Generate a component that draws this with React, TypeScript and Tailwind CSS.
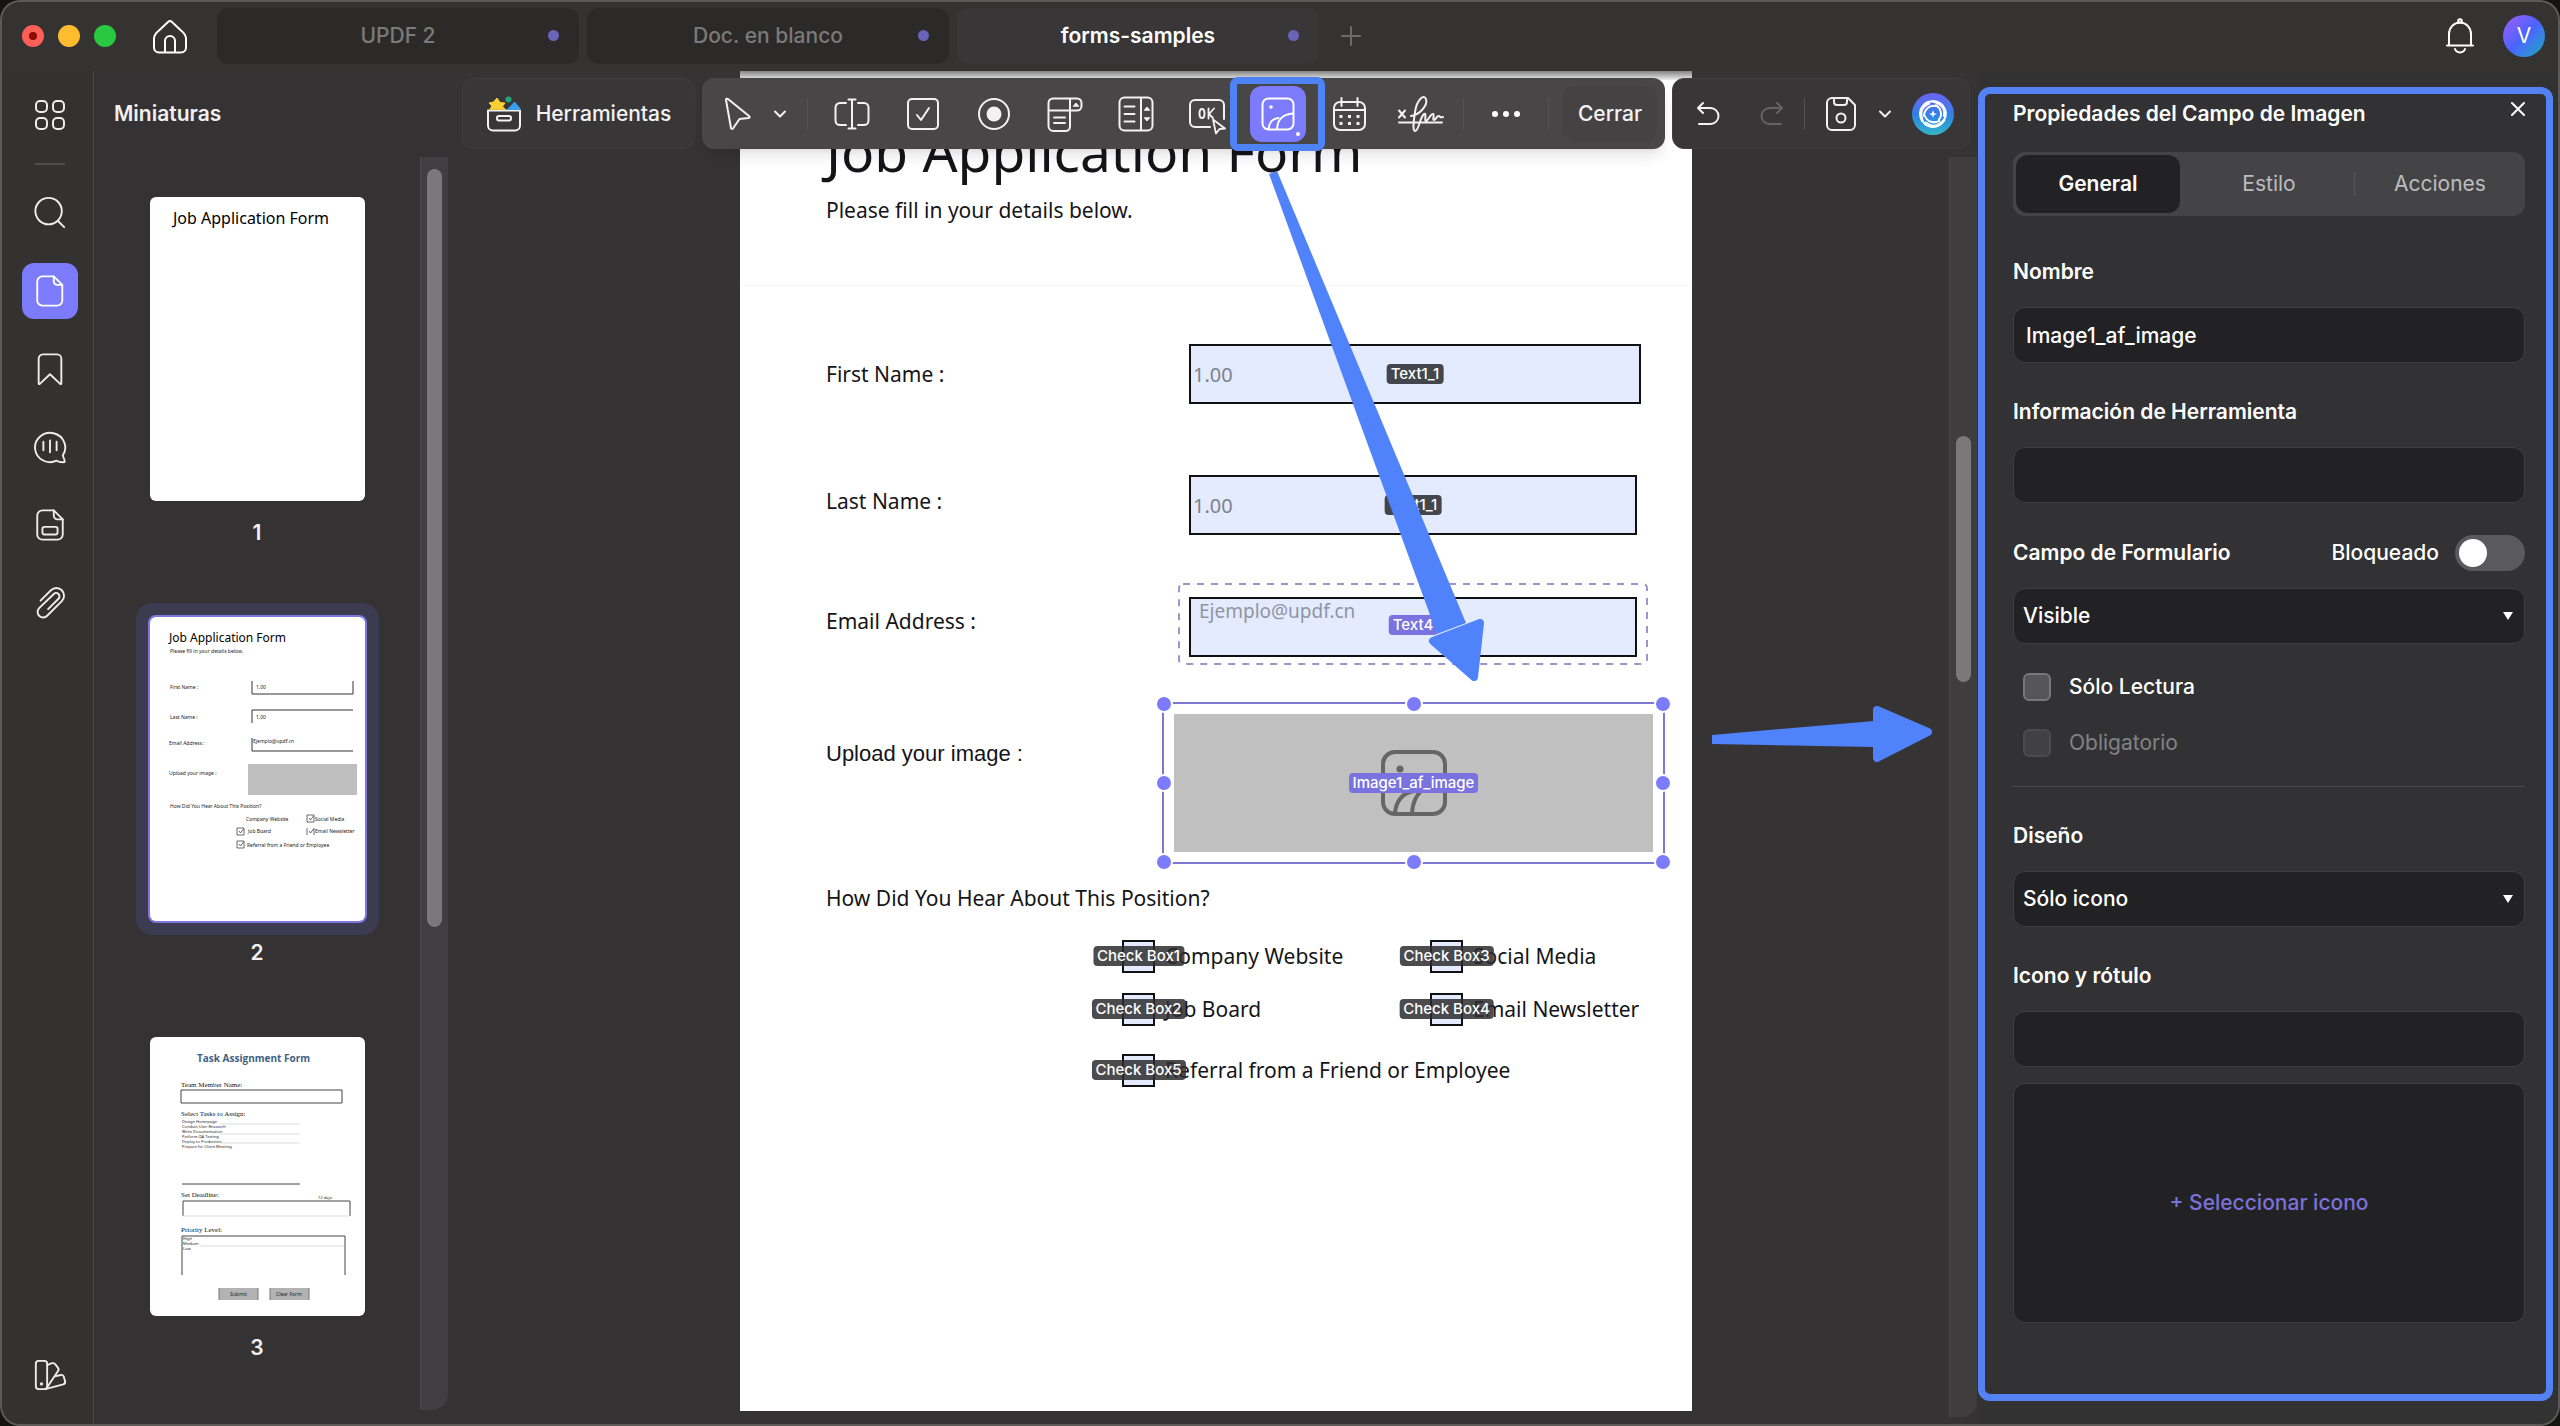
import React, { useState } from 'react';

const Svg: React.FC<{ w?: number; h?: number; box?: string; sw?: number; className?: string; children: React.ReactNode }> = ({
  w = 36,
  h = 36,
  box = '0 0 36 36',
  sw = 2,
  className,
  children,
}) => (
  <svg
    width={w}
    height={h}
    viewBox={box}
    fill="none"
    stroke="currentColor"
    strokeWidth={sw}
    strokeLinecap="round"
    strokeLinejoin="round"
    className={className}
    aria-hidden="true"
  >
    {children}
  </svg>
);

const ImageGlyph: React.FC = () => (
  <>
    <rect x="2.500" y="2.500" width="31" height="31" rx="6" />
    <circle cx="11" cy="11" r="1.8" fill="currentColor" stroke="none" />
    <path d="M8.5 33c.5-6 4-10.500 10-11" />
    <path d="M17 33c.5-9 6-15 16-15.500" />
  </>
);

const ChevronDown: React.FC = () => (
  <Svg w={12} h={8} box="0 0 12 8">
    <path d="M1 1.500l5 5 5-5" />
  </Svg>
);

const navItems = [
  { name: 'Buscar', icon: <><circle cx="16.500" cy="16" r="14" /><path d="M26.500 26.500l6.500 6.500" /></> },
  {
    name: 'Miniaturas',
    active: true,
    icon: <><path d="M9 2.500h13l9 9V28a5.500 5.500 0 0 1-5.500 5.500h-15A5.500 5.500 0 0 1 4.500 28V8A5.500 5.500 0 0 1 10 2.500" /><path d="M22 2.500V8a3.500 3.500 0 0 0 3.500 3.500H31" /></>,
  },
  { name: 'Marcadores', icon: <path d="M6 33V7a4.500 4.500 0 0 1 4.500-4.500h15A4.500 4.500 0 0 1 30 7v26q0 1.500-1.500.5L18 23.500 7.500 33.500Q6 34.500 6 33z" /> },
  { name: 'Comentarios', icon: <><path d="M31.500 27A16 15.500 0 1 0 25 32.500q3 2 8.500 1.500.5-1-2-7z" /><path d="M11 12.500v9M18 11v12.500M25 12.500v9" /></> },
  {
    name: 'Campos',
    icon: <><path d="M22 2.500H10A5.500 5.500 0 0 0 4.500 8v20a5.500 5.500 0 0 0 5.500 5.500h16a5.500 5.500 0 0 0 5.500-5.500V12z" /><path d="M22 2.500V8a4 4 0 0 0 4 4h5.500" /><rect x="10" y="20" width="16" height="8" rx="2" /></>,
  },
  { name: 'Adjuntos', icon: <path d="M8 15.500L19 4.500a8 8 0 0 1 11.500 11.500L15 31.500a5.500 5.500 0 0 1-8.500-8L22 8.500a3.500 3.500 0 0 1 5 5L16 24.500" /> },
];

const tools = [
  { name: 'Campo de texto', icon: <><path d="M12 7H6a4.500 4.500 0 0 0-4.500 4.500v13A4.500 4.500 0 0 0 6 29h6M24 7h6a4.500 4.500 0 0 1 4.500 4.500v13A4.500 4.500 0 0 1 30 29h-6M18 3.500v29M14.500 3.500h7M14.500 32.500h7" /></> },
  { name: 'Casilla', icon: <><rect x="3" y="3" width="30" height="30" rx="4" /><path d="M12 19l4 5 8-12" /></> },
  { name: 'Opción', icon: <><circle cx="18" cy="18" r="15" /><circle cx="18" cy="18" r="7.500" fill="currentColor" stroke="none" /></> },
  {
    name: 'Lista desplegable',
    icon: <><path d="M6 2.500h24a4.500 4.500 0 0 1 4.500 4.500v3a4.500 4.500 0 0 1-4.500 4.500H1.500V7A4.500 4.500 0 0 1 6 2.500zM23 2.500v28a4.500 4.500 0 0 1-4.500 4.500h-12a5 5 0 0 1-5-5V14M7 21.500h11M7 27h11" /><path d="M26.500 10l2.500-3 2.500 3z" fill="currentColor" strokeWidth="1" /></>,
  },
  {
    name: 'Cuadro de lista',
    icon: <><rect x="1.500" y="1.500" width="33" height="33" rx="5" /><path d="M23 2v32M6.500 10.500h10M6.500 18h10M6.500 25.500h10" /><path d="M26.500 14l2.500-3 2.500 3zM26.500 22l2.500 3 2.500-3z" fill="currentColor" strokeWidth="1" /></>,
  },
  {
    name: 'Botón',
    icon: <><path d="M21 31H6a5 5 0 0 1-5-5V9a5 5 0 0 1 5-5h24a5 5 0 0 1 5 5v14" /><ellipse cx="13" cy="17.500" rx="2.500" ry="4.500" /><path d="M19.500 12.500v10M25 12.500l-5 5.500 4 4M24 23.500l3 14 3.500-4.500 5.500-.500z" strokeWidth="1.800" /></>,
  },
  { name: 'Imagen', active: true, icon: <ImageGlyph /> },
  {
    name: 'Fecha',
    icon: <><rect x="3" y="6" width="31" height="28" rx="6" /><path d="M3 14h31M10.500 2v8M26.500 2v8" /><path d="M8.500 19h3v3h-3zM17 19h3v3h-3zM25.500 19h3v3h-3zM8.500 26h3v3h-3zM17 26h3v3h-3zM25.500 26h3v3h-3z" fill="currentColor" stroke="none" /></>,
  },
  {
    name: 'Firma',
    icon: <path d="M-3 14.500l6 7M3 14.500l-6 7M-3 26.500h43M9 20c8-1 17-10 15-17-2-5-9 0-11 13-1 8-3 18 0 19 4 0 4-12 9-17 3-2 0 7 2 7s5-8 7-7-1 6 1 6 3-5 5-4 1 2 4 1" />,
  },
];

const tabs = [
  { name: 'UPDF 2' },
  { name: 'Doc. en blanco' },
  { name: 'forms-samples', active: true },
];

const Divider: React.FC = () => <span className="h-8 w-px shrink-0 bg-[#545252]" />;

const TitleBar: React.FC = () => (
  <header className="flex h-[71px] shrink-0 items-center bg-[#343331] pl-[22px] pr-[15px]">
    <div className="flex items-center gap-[14px]">
      <button aria-label="Cerrar ventana" className="flex h-[22px] w-[22px] items-center justify-center rounded-full bg-[#fe5f57]">
        <span className="h-2 w-2 rounded-full bg-[#8b0a05]" />
      </button>
      <button aria-label="Minimizar" className="h-[22px] w-[22px] rounded-full bg-[#febc2e]" />
      <button aria-label="Maximizar" className="h-[22px] w-[22px] rounded-full bg-[#28c840]" />
    </div>
    <button aria-label="Inicio" className="ml-9 text-white">
      <Svg>
        <path d="M7 12.500L16 4q2-2 4 0l9 8.500q5 4 5 8v9a5 5 0 0 1-5 5H7a5 5 0 0 1-5-5v-9q0-4 5-8z" />
        <path d="M13 34V23a5 5 0 0 1 10 0v11" />
      </Svg>
    </button>
    <nav className="ml-[29px] flex gap-2">
      {tabs.map((tab) => (
        <button
          key={tab.name}
          className={`relative h-14 w-[362px] rounded-xl text-[21px] ${
            tab.active ? 'bg-[#383637] font-semibold text-white' : 'bg-[#2b2a29] font-medium text-[#7b7a79]'
          }`}
        >
          {tab.name}
          <span className="absolute right-5 top-[22px] h-[11px] w-[11px] rounded-full bg-[#6a63b8]" />
        </button>
      ))}
    </nav>
    <button aria-label="Nueva pestaña" className="ml-[22px] text-[#6d6c6b]">
      <Svg w={20} h={20} box="0 0 20 20">
        <path d="M10 1v18M1 10h18" />
      </Svg>
    </button>
    <button aria-label="Notificaciones" className="ml-auto text-white">
      <Svg w={32} h={36} box="0 0 32 36">
        <path d="M5 27.500V16a11 11.500 0 0 1 22 0v11.500M3 27.500h26" />
        <circle cx="16" cy="3" r="1.800" />
        <path d="M11 31c1.500 4.500 8.500 4.500 10 0" />
      </Svg>
    </button>
    <button className="ml-[27px] h-[42px] w-[42px] rounded-full bg-linear-to-br from-[#9b5cf6] via-[#4b62ff] to-[#0ea5b8] text-[21px] text-white">
      V
    </button>
  </header>
);

const Sidebar: React.FC = () => (
  <nav className="flex w-[94px] shrink-0 flex-col items-center border-r border-[#4a4948] bg-[#333231] pb-[23px] pl-[7px] pt-4 text-[#eeedec]">
    <button aria-label="Vista" className="flex h-14 w-14 items-center justify-center">
      <Svg w={30} h={30} box="0 0 30 30">
        <rect x="1" y="1" width="11" height="11" rx="4" />
        <rect x="18" y="1" width="11" height="11" rx="4" />
        <rect x="1" y="18" width="11" height="11" rx="4" />
        <rect x="18" y="18" width="11" height="11" rx="4" />
      </Svg>
    </button>
    <span className="my-5 h-0.5 w-[30px] bg-[#4e4d4c]" />
    <div className="flex flex-col gap-[22px]">
      {navItems.map((item) => (
        <button
          key={item.name}
          aria-label={item.name}
          className={`flex h-14 w-14 items-center justify-center rounded-xl ${item.active ? 'bg-[#7b7bfb] text-white' : ''}`}
        >
          <Svg w={34} h={34}>{item.icon}</Svg>
        </button>
      ))}
    </div>
    <button aria-label="Paleta" className="mt-auto flex h-14 w-14 items-center justify-center">
      <Svg w={34} h={34}>
        <rect x="3" y="3" width="12" height="30" rx="3" />
        <path d="M15 7.500l5-2q2-.5 3.500 1l3 4q1.500 2-.5 4L15 31" />
        <path d="M13 33l19-5q2.500-1 2-3.500l-1.500-5q-1-2-3-1.500l-6.500 1.500" />
        <circle cx="9" cy="27.500" r=".7" fill="currentColor" />
      </Svg>
    </button>
  </nav>
);

// Page previews, drawn at their own scale
const PreviewOne: React.FC = () => (
  <svg viewBox="0 0 215 304" width="215" height="304" fontFamily="Noto Sans, sans-serif">
    <text x="23" y="27" fontSize="16">Job Application Form</text>
  </svg>
);

const PreviewTwo: React.FC = () => (
  <svg viewBox="0 0 215 304" width="215" height="304" fontFamily="Noto Sans, sans-serif" fontSize="5" fill="#222">
    <text x="19" y="25" fontSize="12" fill="#000">Job Application Form</text>
    <text x="20" y="36">Please fill in your details below.</text>
    <text x="20" y="72">First Name :</text>
    <text x="20" y="102">Last Name :</text>
    <text x="19" y="128">Email Address :</text>
    <text x="19" y="158">Upload your image :</text>
    <text x="20" y="191">How Did You Hear About This Position?</text>
    <text x="96" y="204">Company Website</text>
    <text x="98" y="216">Job Board</text>
    <text x="97" y="230">Referral from a Friend or Employee</text>
    <text x="165" y="204">Social Media</text>
    <text x="165" y="216">Email Newsletter</text>
    <text x="106" y="72">1.00</text>
    <text x="106" y="102">1.00</text>
    <text x="103" y="126">Ejemplo@updf.cn</text>
    <path d="M102 64v13h101V64M203 93H102v13M102 121v13h101" fill="none" stroke="#333" />
    <rect x="98" y="147" width="109" height="31" fill="#bfbfbf" />
    <path d="M87 211h7v7h-7zM157 198h7v7h-7zM87 224h7v7h-7zM157 211v7M164 211v7M89 214l1.500 2 3-4M159 201l1.500 2 3-4M89 227l1.500 2 3-4M159 214l1.500 2 3-4" fill="none" stroke="#444" strokeWidth=".8" />
  </svg>
);

const PreviewThree: React.FC = () => (
  <svg viewBox="0 0 215 279" width="215" height="279" fontFamily="Noto Sans, sans-serif" fontSize="4" fill="#222">
    <text x="47" y="25" fontSize="10" fontWeight="700" fontFamily="Open Sans, sans-serif" fill="#3f5f82">Task Assignment Form</text>
    <g fontFamily="Liberation Serif, serif" fontSize="7" fontWeight="500" fill="#111">
      <text x="31" y="50">Team Member Name:</text>
      <text x="31" y="79">Select Tasks to Assign:</text>
      <text x="31" y="160">Set Deadline:</text>
      <text x="31" y="195">Priority Level:</text>
    </g>
    <text x="32" y="86">Design Homepage</text>
    <text x="32" y="91">Conduct User Research</text>
    <text x="32" y="96">Write Documentation</text>
    <text x="32" y="101">Perform QA Testing</text>
    <text x="32" y="106">Deploy to Production</text>
    <text x="32" y="111">Prepare for Client Meeting</text>
    <text x="168" y="162">12 days</text>
    <text x="33" y="203">High</text>
    <text x="33" y="208">Medium</text>
    <text x="33" y="213">Low</text>
    <path d="M31 53h161v13H31zM32 147h118M33 179v-15h167v15M32 238v-39h163v39" fill="none" stroke="#444" />
    <path d="M33 179h167M70 87h80M70 97h80M70 106h80M50 209h144" stroke="#ddd" />
    <path d="M69 251h39v12H69zM120 251h39v12h-39z" fill="#b3b3b3" />
    <path d="M69 251v12M120 251v12M108 251v12M159 251v12" stroke="#777" />
    <text x="80" y="259" fontSize="5">Submit</text>
    <text x="126" y="259" fontSize="5">Clear Form</text>
  </svg>
);

const previews = [
  { page: 1, drawing: <PreviewOne /> },
  { page: 2, drawing: <PreviewTwo />, active: true },
  { page: 3, drawing: <PreviewThree /> },
];

const Thumbnails: React.FC = () => (
  <aside className="flex w-[361px] shrink-0 flex-col bg-[#343233]">
    <h2 className="flex h-[86px] items-center pl-5 text-[21px] font-semibold text-[#f1f0f0]">Miniaturas</h2>
    <div className="flex flex-1">
      <ul className="flex flex-1 flex-col items-center gap-[58px] pt-[26px]">
        {previews.map((p) => (
          <li key={p.page} className="flex flex-col items-center gap-1.5 text-[21px] leading-6 text-[#f1f0f0]">
            <div className={`rounded-2xl p-[14px] ${p.active ? 'bg-[#3d3b50]' : ''}`}>
              <div className={`overflow-hidden rounded-md bg-white ${p.active ? 'ring-2 ring-[#7c78e0]' : ''}`}>{p.drawing}</div>
            </div>
            <span className="font-semibold">{p.page}</span>
          </li>
        ))}
      </ul>
      <div className="mb-4 mr-[7px] flex w-7 justify-center rounded-br-2xl border-l border-[#4b494b] bg-[#403e40] pt-3">
        <span className="h-[758px] w-[15px] rounded-full bg-[#7a7879]" />
      </div>
    </div>
  </aside>
);

const Toolbar: React.FC = () => (
  <div className="absolute inset-x-[7px] top-[7px] z-10 flex h-[71px] gap-[7px] text-[#f2f2f2]">
    <button className="flex w-[233px] items-center justify-center gap-[14px] rounded-xl border border-[#403e40] bg-[#383637] text-[21px] font-medium">
      <Svg>
        <path d="M2 14.500h32v15a5 5 0 0 1-5 5H7a5 5 0 0 1-5-5z" />
        <rect x="11" y="20" width="14" height="4.500" rx="2" />
        <path d="M4 13l2-3-3-3 4.500-1L11 2l3 4.500 5 .5-2.500 3.500L19 13z" fill="#fbcf33" stroke="#fbcf33" strokeWidth="1" />
        <circle cx="22.500" cy="3.500" r="3" fill="#28a37f" stroke="none" />
        <path d="M23 13l5.500-6 5 6z" fill="#3a9df0" stroke="#3a9df0" />
      </Svg>
      Herramientas
    </button>

    <div className="flex flex-1 items-center rounded-xl bg-[#484646] pl-3 shadow-lg">
      <button aria-label="Seleccionar" className="flex w-12 justify-center">
        <Svg w={30} h={34} box="0 0 30 34">
          <path d="M3 3q0-2 2-1l21 17q1.500 1.500-.5 2l-9 1-6.500 9.500q-1.500 1-2-.5z" />
        </Svg>
      </button>
      <button aria-label="Más selecciones" className="mr-[9px] flex w-9 justify-center">
        <ChevronDown />
      </button>
      <Divider />
      <div className="mx-2 flex">
        {tools.map((tool) => (
          <div key={tool.name} className="relative flex w-[71px] justify-center">
            <button
              aria-label={tool.name}
              className={`relative flex h-14 w-14 items-center justify-center rounded-xl ${tool.active ? 'bg-[#7b7bfb] text-white' : ''}`}
            >
              <Svg className="overflow-visible">{tool.icon}</Svg>
              {tool.active && <span className="absolute bottom-1.5 right-1.5 h-1 w-1 rounded-full bg-white" />}
            </button>
            {tool.active && (
              <span className="pointer-events-none absolute -inset-x-3 -inset-y-[9px] rounded-lg border-[7px] border-[#4f82f5]" />
            )}
          </div>
        ))}
      </div>
      <Divider />
      <button aria-label="Más" className="flex w-[84px] justify-center gap-[5px]">
        <span className="h-1.5 w-1.5 rounded-full bg-white" />
        <span className="h-1.5 w-1.5 rounded-full bg-white" />
        <span className="h-1.5 w-1.5 rounded-full bg-white" />
      </button>
      <Divider />
      <button className="ml-auto mr-2 h-14 w-[94px] rounded-xl bg-[#444243] text-[21px] font-medium">Cerrar</button>
    </div>

    <div className="flex w-[298px] items-center rounded-xl border border-[#403e3f] bg-[#383637] pl-[3px]">
      <button aria-label="Deshacer" className="flex w-16 justify-center">
        <Svg w={24} h={24} box="0 0 24 24">
          <path d="M7 1L2 6l5 5M2 6h12.500a7.500 7.500 0 0 1 0 16H3" />
        </Svg>
      </button>
      <button aria-label="Rehacer" disabled className="flex w-16 justify-center text-[#646263]">
        <Svg w={24} h={24} box="0 0 24 24">
          <path d="M17 1l5 5-5 5M22 6H9.500a7.500 7.500 0 0 0 0 16H21" />
        </Svg>
      </button>
      <Divider />
      <button aria-label="Guardar" className="ml-2 flex w-14 justify-center">
        <Svg w={32} h={34} box="0 0 32 34">
          <path d="M2 6a5 5 0 0 1 5-5h16l7 7v20a5 5 0 0 1-5 5H7a5 5 0 0 1-5-5z" />
          <path d="M9 1v4a3 3 0 0 0 3 3h7a3 3 0 0 0 3-3V1" />
          <circle cx="16" cy="21" r="4.500" />
        </Svg>
      </button>
      <button aria-label="Opciones de guardado" className="flex w-8 justify-center">
        <ChevronDown />
      </button>
      <button aria-label="Asistente" className="ml-[11px] h-[42px] w-[42px] rounded-full bg-linear-to-b from-[#6a63f2] via-[#2f7fe6] to-[#35b6c4] text-white">
        <Svg w={42} h={42} box="0 0 42 42">
          {[0, 120, 240].map((angle) => (
            <path key={angle} d="M10 28C4 16 14 5 25 10c5 2 8 7 7 13M12 23c0-6 5-11 11-10" transform={`rotate(${angle} 21 21)`} />
          ))}
          <path d="M21 17l1 3 3 1-3 1-1 3-1-3-3-1 3-1z" fill="currentColor" stroke="none" />
        </Svg>
      </button>
    </div>
  </div>
);

const Tag: React.FC<{ tone?: 'dark' | 'violet' | 'glass'; children: React.ReactNode }> = ({ tone = 'dark', children }) => {
  const tones = {
    dark: 'bg-[#43464c]',
    violet: 'bg-[#7a72de]',
    glass: 'bg-[#2d2d30]/85',
  };
  return (
    <span
      className={`pointer-events-none absolute left-1/2 top-1/2 -translate-x-1/2 -translate-y-1/2 whitespace-nowrap rounded px-1 font-[Inter,sans-serif] text-[15px] font-medium leading-5 text-white ${tones[tone]}`}
    >
      {children}
    </span>
  );
};

const handles = [
  'left-0 top-0', 'left-1/2 top-0', 'left-full top-0',
  'left-0 top-1/2', 'left-full top-1/2',
  'left-0 top-full', 'left-1/2 top-full', 'left-full top-full',
];

const sources = ['Company Website', 'Social Media', 'Job Board', 'Email Newsletter', 'Referral from a Friend or Employee'];
const boxNumbers = [1, 3, 2, 4, 5];

const DocumentPage: React.FC = () => (
  <div className="relative mx-auto w-[952px] flex-1">
    <div className="h-full bg-white bg-linear-to-b from-[#858585] to-[#ededed] bg-[length:100%_9px] bg-no-repeat font-['Noto_Sans',sans-serif] text-[21px] leading-8 text-[#151518]">
      <div className="pl-[86px] pt-[50px]">
        <h1 className="text-[55px] leading-[60px]">Job Application Form</h1>
        <p className="mt-[13px]">Please fill in your details below.</p>
      </div>
      <hr className="mt-[59px] border-[#f6f6f6]" />

      <div className="pl-[86px] pt-[58px]">
        <div className="flex h-[60px] items-center">
          <label htmlFor="first" className="w-[363px]">First Name :</label>
          <div className="relative">
            <input id="first" defaultValue="1.00" className="h-[60px] w-[452px] border-2 border-[#111] bg-[#e4ebff] px-0.5 text-[20px] text-[#7d828c]" />
            <Tag>Text1_1</Tag>
          </div>
        </div>
        <div className="mt-[71px] flex h-[60px] items-center">
          <label htmlFor="last" className="w-[363px] pb-2">Last Name :</label>
          <div className="relative">
            <input id="last" defaultValue="1.00" className="h-[60px] w-[448px] border-2 border-[#111] bg-[#e4ebff] px-0.5 text-[20px] text-[#7d828c]" />
            <Tag>Text1_1</Tag>
          </div>
        </div>
        <div className="mt-[60px] flex h-[60px] items-center">
          <label htmlFor="email" className="w-[363px] pb-2">Email Address :</label>
          <div className="relative">
            <input
              id="email"
              placeholder="Ejemplo@updf.cn"
              className="h-[60px] w-[448px] border-2 border-[#111] bg-[#e4ebff] px-2 pb-8 text-[19px] placeholder:text-[#8f95a3]"
            />
            <svg className="pointer-events-none absolute -inset-[11px] h-[82px] w-[470px]" aria-hidden="true">
              <rect x="1" y="1" width="468" height="80" rx="4" fill="none" stroke="#9a95cc" strokeWidth="2" strokeDasharray="7 7" />
            </svg>
            <Tag tone="violet">Text4</Tag>
          </div>
        </div>
        <div className="mt-[59px] flex h-[138px]">
          <span className="w-[348px] pt-6 font-['Liberation_Sans',sans-serif] text-[22px]">Upload your image :</span>
          <div className="relative flex w-[479px] items-center justify-center bg-[#c0c0c0] text-[#666]">
            <Svg w={72} h={72} sw={2}>
              <ImageGlyph />
            </Svg>
            <div className="absolute -inset-3 border-2 border-[#7f78d2]">
              {handles.map((pos) => (
                <span key={pos} className={`absolute h-[18px] w-[18px] -translate-x-1/2 -translate-y-1/2 rounded-full border-2 border-white bg-[#7b7bfb] ${pos}`} />
              ))}
            </div>
            <Tag tone="violet">Image1_af_image</Tag>
          </div>
        </div>
        <p className="mt-[30px]">How Did You Hear About This Position?</p>
      </div>

      <div className="mt-[15px] grid grid-cols-[308px_1fr] grid-rows-[54px_52px_70px] items-center pl-[382px]">
        {sources.map((source, i) => (
          <label key={source} className={`flex items-center gap-2.5 whitespace-nowrap ${i === 4 ? 'col-span-2' : ''}`}>
            <span className="relative flex">
              <input type="checkbox" className="h-[33px] w-[33px] appearance-none border-2 border-[#111] bg-[#e4ebff]" />
              <Tag tone="glass">Check Box{boxNumbers[i]}</Tag>
            </span>
            {source}
          </label>
        ))}
      </div>
    </div>

    {/* Guide arrows, over everything else */}
    <svg
      className="pointer-events-none absolute left-0 top-0 z-20 h-[800px] w-[1200px]"
      viewBox="740 71 1200 800"
      fill="#4f82fb"
      stroke="#4f82fb"
      strokeLinejoin="round"
      aria-hidden="true"
    >
      <path d="M1269 174l8-3L1331 300l135 323-29 11L1315 300z" stroke="none" />
      <path d="M1433 641l47-18-6 54z" strokeWidth="8" />
      <path d="M1712 735l162-14v26l-162-3z" stroke="none" />
      <path d="M1877 710l51 22-51 26z" strokeWidth="8" />
    </svg>
  </div>
);

const Canvas: React.FC = () => (
  <main className="relative flex min-w-0 flex-1 flex-col bg-[#353334] pb-[15px]">
    <Toolbar />
    <DocumentPage />
    <div className="absolute bottom-[9px] right-0 top-[86px] flex w-7 justify-center rounded-br-2xl border-l border-[#464445] bg-[#3f3d3e] pt-[279px]">
      <span className="h-[246px] w-[15px] rounded-full bg-[#7a7879]" />
    </div>
  </main>
);

const fieldClass = 'h-14 w-full rounded-xl border border-[#3f3f41] bg-[#222224] text-[21px] font-medium text-white';

const SelectBox: React.FC<{ id: string; options: string[] }> = ({ id, options }) => (
  <div className="relative">
    <select id={id} className={`${fieldClass} appearance-none px-[9px]`}>
      {options.map((o) => (
        <option key={o}>{o}</option>
      ))}
    </select>
    <svg className="pointer-events-none absolute right-3 top-6 h-2 w-2.5" viewBox="0 0 10 8" fill="#fff" aria-hidden="true">
      <path d="M0 0h10L5 8z" />
    </svg>
  </div>
);

const PropertiesPanel: React.FC = () => {
  const [tab, setTab] = useState('General');

  return (
    <aside className="flex w-[583px] shrink-0 bg-[#333232] pb-[25px] pl-px pr-[7px] pt-4">
      <section className="flex-1 rounded-xl border-[7px] border-[#5482f2] bg-[#323234] pl-7 pr-[21px] pt-2 text-[21px] leading-6 text-white">
        <div className="flex items-start justify-between">
          <h2 className="font-semibold">Propiedades del Campo de Imagen</h2>
          <button aria-label="Cerrar panel" className="flex">
            <Svg w={14} h={14} box="0 0 14 14">
              <path d="M1 1l12 12M13 1L1 13" />
            </Svg>
          </button>
        </div>

        <div className="mt-[26px] flex h-16 items-center gap-[7px] rounded-xl bg-[#444446] p-[3px]">
          {['General', 'Estilo', 'Acciones'].map((name, i) => (
            <button
              key={name}
              onClick={() => setTab(name)}
              className={`relative h-[58px] flex-1 basis-0 rounded-xl ${tab === name ? 'bg-[#222224] font-semibold text-white' : 'text-[#bdbdbe]'}`}
            >
              {i === 2 && <span className="absolute -left-1 top-[17px] h-6 w-px bg-[#565658]" />}
              {name}
            </button>
          ))}
        </div>

        <label htmlFor="name" className="mb-[23px] mt-[44px] block font-semibold">Nombre</label>
        <input id="name" defaultValue="Image1_af_image" className={`${fieldClass} px-3`} />

        <label htmlFor="tip" className="mb-[23px] mt-[37px] block font-semibold">Información de Herramienta</label>
        <input id="tip" className={`${fieldClass} px-3`} />

        <div className="mb-[17px] mt-[32px] flex h-9 items-center justify-between">
          <label htmlFor="visibility" className="font-semibold">Campo de Formulario</label>
          <label className="flex items-center gap-4 font-medium">
            Bloqueado
            <input
              type="checkbox"
              role="switch"
              className="h-9 w-[70px] appearance-none rounded-full bg-[#5a5a5c] p-1 before:block before:h-7 before:w-7 before:rounded-full before:bg-white checked:bg-[#7b7bfb] checked:before:ml-auto"
            />
          </label>
        </div>
        <SelectBox id="visibility" options={['Visible', 'Oculto']} />

        <div className="mt-[29px] flex flex-col gap-7 pl-[10px]">
          <label className="flex items-center gap-[18px] font-medium">
            <input type="checkbox" className="h-7 w-7 appearance-none rounded-md border-2 border-[#77777a] bg-[#565658]" />
            Sólo Lectura
          </label>
          <label className="flex items-center gap-[18px] text-[#838385]">
            <input type="checkbox" disabled className="h-7 w-7 appearance-none rounded-md border-2 border-[#4c4c4e] bg-[#414143]" />
            Obligatorio
          </label>
        </div>
        <hr className="mt-[29px] border-[#4b4b4d]" />

        <label htmlFor="layout" className="mb-[23px] mt-[37px] block font-semibold">Diseño</label>
        <SelectBox id="layout" options={['Sólo icono', 'Sólo rótulo']} />

        <label htmlFor="caption" className="mb-[23px] mt-[37px] block font-semibold">Icono y rótulo</label>
        <input id="caption" className={`${fieldClass} px-3`} />
        <button className="mt-4 h-60 w-full rounded-xl border border-[#3f3f41] bg-[#222224] font-medium text-[#7a72d8]">
          + Seleccionar icono
        </button>
      </section>
    </aside>
  );
};

const App: React.FC = () => (
  <div className="min-h-screen bg-[#141512] font-[Inter,sans-serif]">
    <div className="relative flex min-h-screen flex-col overflow-hidden rounded-[20px] bg-[#2d2c2a]">
      <TitleBar />
      <div className="flex flex-1">
        <Sidebar />
        <Thumbnails />
        <Canvas />
        <PropertiesPanel />
      </div>
      <div className="pointer-events-none absolute inset-0 z-30 rounded-[20px] border-2 border-[#5b5a58]" />
    </div>
  </div>
);

export default App;
